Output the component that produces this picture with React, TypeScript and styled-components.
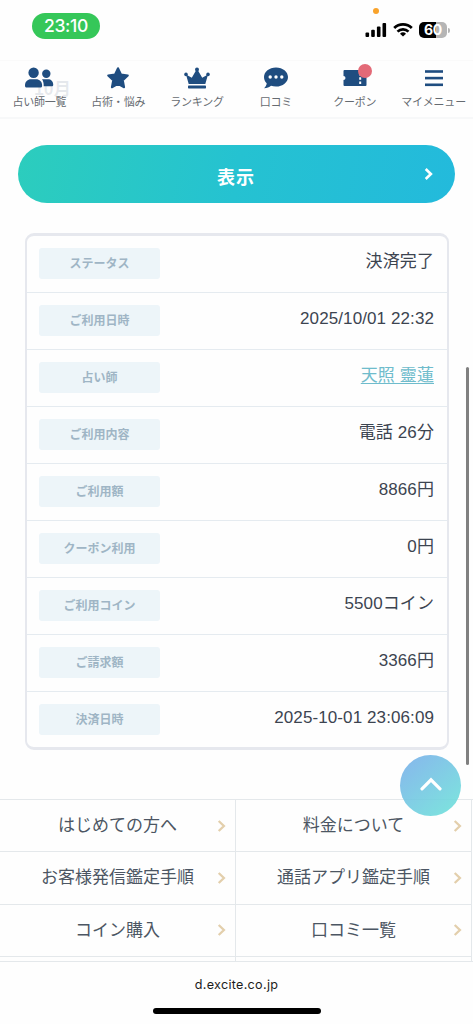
import React from 'react';
import styled, { createGlobalStyle } from 'styled-components';

const Global = createGlobalStyle`
  * { box-sizing: border-box; }
  body {
    margin: 0;
    background: #fefefe;
    font-family: "Liberation Sans", "Noto Sans CJK JP", sans-serif;
    color: #3c4654;
  }
  svg { display: block; }
`;

const Screen = styled.div`
  position: relative;
  display: flex;
  flex-direction: column;
  width: 473px;
  height: 1024px;
  overflow: hidden;
  background: #fefefe;
`;

const StatusBar = styled.header`
  display: flex;
  justify-content: space-between;
  height: 60px;
  padding: 13px 23px 0 32px;
`;

const Clock = styled.div`
  width: 68px;
  height: 26px;
  border-radius: 13px;
  background: #35c759;
  color: #fff;
  font: 500 17.5px/26px Inter, sans-serif;
  letter-spacing: -0.3px;
  text-align: center;
`;

const Indicators = styled.div`
  display: flex;
  gap: 6px;
  padding-top: 9px;
`;

const Battery = styled.div`
  width: 28px;
  height: 16px;
  border-radius: 5px;
  background: linear-gradient(90deg, #000 60%, #b5b5b5 60%);
  color: #fff;
  font: 700 14px/16px Inter, sans-serif;
  letter-spacing: -0.3px;
  text-align: center;
`;

const BatteryWrap = styled.div`
  display: flex;
  gap: 1px;
  &::after {
    content: '';
    width: 2px;
    height: 5px;
    margin-top: 5.5px;
    border-radius: 0 2px 2px 0;
    background: #b5b5b5;
  }
`;

const MicDot = styled.i`
  position: absolute;
  top: 8px;
  left: 373px;
  width: 6px;
  height: 6px;
  border-radius: 50%;
  background: #f9a32b;
`;

const Nav = styled.nav`
  position: relative;
  display: grid;
  grid-template-columns: repeat(6, 1fr);
  height: 59px;
  border-top: 1px solid #fafafa;
  border-bottom: 2px solid #f7f8f9;
`;

const NavItem = styled.a`
  position: relative;
  display: flex;
  flex-direction: column;
  align-items: center;
  padding-top: 4px;
  color: #666b71;
  font-size: 11px;
  line-height: 16px;
  letter-spacing: -0.2px;
  white-space: nowrap;
`;

const NavIcon = styled.span`
  display: flex;
  align-items: center;
  height: 26px;
  margin-bottom: 3px;
`;

const Badge = styled.i`
  position: absolute;
  top: 3px;
  left: 43px;
  width: 14px;
  height: 14px;
  border-radius: 50%;
  background: #e36a77;
`;

const PassingMonth = styled.div`
  position: absolute;
  top: 16px;
  left: 34px;
  color: rgba(60, 80, 110, 0.12);
  font-size: 17.5px;
  font-weight: 700;
  line-height: 24px;
`;

const Content = styled.main`
  flex: 1;
  padding-top: 26px;
`;

const ShowButton = styled.button`
  display: flex;
  align-items: center;
  justify-content: flex-end;
  width: 437px;
  height: 58px;
  margin: 0 0 0 18px;
  padding: 0 21px 0 0;
  border: 0;
  border-radius: 29px;
  background: linear-gradient(100deg, #2ccdbd 0%, #25c2d1 50%, #23badc 100%);
  color: #fff;
  font: 700 18px/26px "Noto Sans CJK JP", sans-serif;
  letter-spacing: 1px;
`;

const ShowLabel = styled.span`
  flex: 1;
  padding: 4px 0 0 30px;
  text-align: center;
`;

const Card = styled.dl`
  width: 424px;
  height: 517px;
  margin: 30px 0 0 25px;
  border: solid #e6e8ee;
  border-width: 3px 2px;
  border-radius: 9px;
  overflow: hidden;
`;

const Row = styled.div`
  display: flex;
  justify-content: space-between;
  height: 57.05px;
  padding: 12px 13px 0 12px;
  border-bottom: 1.5px solid #e5ebf0;
  &:last-child { border-bottom: 0; }
`;

const Chip = styled.dt`
  width: 121px;
  height: 31px;
  border-radius: 3px;
  background: #edf5f9;
  color: #9fb5c5;
  font: 700 12px/29px "Noto Sans CJK JP", sans-serif;
  text-align: center;
`;

const Value = styled.dd<{ $link?: boolean }>`
  margin: 0;
  padding-top: 1px;
  color: ${(p) => (p.$link ? '#6fbccc' : '#3c4450')};
  font-size: 17px;
  line-height: 26px;
  letter-spacing: 0.1px;
  text-decoration: ${(p) => (p.$link ? 'underline' : 'none')};
  text-decoration-thickness: 1px;
  text-underline-offset: 2px;
`;

const Links = styled.div`
  display: grid;
  grid-template-columns: 236px 236px;
  grid-auto-rows: 52.3px;
  width: 473px;
  height: 163px;
  margin-top: 49px;
  border-top: 1px solid #e4e8eb;
  border-bottom: 1px solid #e4e8eb;
  overflow: hidden;
`;

const LinkCell = styled.a`
  display: flex;
  align-items: center;
  padding-right: 8px;
  border-right: 1px solid #e4e8eb;
  border-bottom: 1px solid #e4e8eb;
  color: #4c5663;
  font-size: 17px;
  line-height: 24px;
`;

const LinkLabel = styled.span`
  flex: 1;
  padding: 1px 0 0 18px;
  text-align: center;
  white-space: nowrap;
`;

const TopButton = styled.button`
  position: absolute;
  top: 755px;
  left: 400px;
  display: grid;
  place-items: center;
  width: 61px;
  height: 61px;
  padding: 0 0 3px;
  border: 0;
  border-radius: 50%;
  background: linear-gradient(140deg, rgba(117, 178, 232, 0.88) 12%, rgba(107, 222, 218, 0.88) 90%);
`;

const ScrollThumb = styled.i`
  position: absolute;
  top: 367px;
  left: 466px;
  width: 3px;
  height: 398px;
  border-radius: 2px;
  background: #808080;
`;

const BrowserBar = styled.footer`
  display: flex;
  flex-direction: column;
  align-items: center;
  height: 62px;
  padding-top: 14px;
  color: #1c1c1c;
  font: 400 12.6px/18px Inter, sans-serif;
  letter-spacing: 0.3px;
`;

const HomeBar = styled.i`
  width: 168px;
  height: 6px;
  margin-top: 14px;
  border-radius: 3px;
  background: #000;
`;

const NAVY = '#1f4d80';

const Signal = () => (
  <svg width="22" height="16" viewBox="0 0 22 16">
    <rect x="0.5" y="10.5" width="3.6" height="4.5" rx="1" />
    <rect x="6.2" y="7.7" width="3.6" height="7.3" rx="1" />
    <rect x="11.9" y="4.4" width="3.6" height="10.6" rx="1" />
    <rect x="17.5" y="1" width="3.6" height="14" rx="1" />
  </svg>
);

const Wifi = () => (
  <svg width="20" height="16" viewBox="0 0 20 16" fill="none" stroke="#000" strokeWidth="2.7">
    <path d="M1.2 6a12.5 12.5 0 0 1 17.6 0" />
    <path d="M4.5 9.6a7.8 7.8 0 0 1 11 0" />
    <path d="M10 14.6 7 11.7a4.4 4.4 0 0 1 6 0Z" fill="#000" stroke="none" />
  </svg>
);

const Chevron = ({ color, width = 2.3 }: { color: string; width?: number }) => (
  <svg width="10" height="14" viewBox="0 0 10 14" fill="none" stroke={color} strokeWidth={width}>
    <path d="m1.7 2 5.2 5-5.2 5" />
  </svg>
);

const People = () => (
  <svg width="30" height="22" viewBox="0 0 30 22" fill={NAVY}>
    <circle cx="9.6" cy="5.8" r="5.2" />
    <circle cx="22.3" cy="6.7" r="4.2" />
    <path d="M1 18.3c0-3.600 2.600-6 6-6h5.100c3.400 0 6 2.400 6 6v.7c0 .9-.6 1.500-1.500 1.500H2.500C1.600 20.500 1 19.900 1 19Z" />
    <path d="M18 12.3h6c3 0 5.200 2.100 5.200 5v.6c0 .9-.5 1.400-1.400 1.400h-8.100c.1-3.300-.5-5.300-1.700-7Z" />
  </svg>
);

const Star = () => (
  <svg width="24" height="24" viewBox="0 0 24 24" fill={NAVY} stroke={NAVY} strokeWidth="2" strokeLinejoin="round">
    <path d="m12 2.2 3 6.3 6.8 1-5 4.8 1.3 7-6.1-3.4-6.1 3.4 1.3-7-5-4.8 6.8-1Z" />
  </svg>
);

const Crown = () => (
  <svg width="28" height="24" viewBox="0 0 28 24" fill={NAVY}>
    <circle cx="14" cy="3.6" r="2" />
    <circle cx="3" cy="8.4" r="1.8" />
    <circle cx="25" cy="8.4" r="1.8" />
    <path d="m3 8.5 5.8 3.2L13 4.5h2l4.2 7.2L25 8.5l-2.7 9.6H5.7Z" />
    <rect x="5" y="19.6" width="18" height="2.8" rx=".7" />
  </svg>
);

const Bubble = () => (
  <svg width="26" height="22" viewBox="0 0 26 22">
    <path fill={NAVY} d="M13 .4C6.2.4 1 4.7 1 10c0 2.500 1 4.600 2.700 6.200C3.500 18.200 2.500 20 1 21.200c3 0 5.400-1 7-2.400 1.500.5 3.200.8 5 .8 6.800 0 12-4.300 12-9.600S19.800.4 13 .4Z" />
    <g fill="#fff">
      <circle cx="7.2" cy="10" r="1.7" />
      <circle cx="13" cy="10" r="1.7" />
      <circle cx="18.8" cy="10" r="1.7" />
    </g>
  </svg>
);

const Ticket = () => (
  <svg width="24" height="18" viewBox="0 0 24 18">
    <path fill={NAVY} d="M1.5 1h21A1 1 0 0 1 23.5 2v14a1 1 0 0 1-1 1h-21a1 1 0 0 1-1-1v-5a2 2 0 0 0 0-4V2a1 1 0 0 1 1-1Z" />
    <path stroke="#fff" strokeWidth="2" strokeDasharray="2.5 1.8" d="M17.2 4v12" />
  </svg>
);

const Menu = () => (
  <svg width="18" height="18" viewBox="0 0 18 18" fill={NAVY}>
    <rect y="1.2" width="18" height="2.6" />
    <rect y="7.8" width="18" height="2.6" />
    <rect y="14.5" width="18" height="2.6" />
  </svg>
);

const NAV = [
  { label: '占い師一覧', icon: <People /> },
  { label: '占術・悩み', icon: <Star /> },
  { label: 'ランキング', icon: <Crown /> },
  { label: '口コミ', icon: <Bubble /> },
  { label: 'クーポン', icon: <Ticket />, badge: true },
  { label: 'マイメニュー', icon: <Menu /> },
];

const ROWS = [
  { label: 'ステータス', value: '決済完了' },
  { label: 'ご利用日時', value: '2025/10/01 22:32' },
  { label: '占い師', value: '天照 靈蓮', link: true },
  { label: 'ご利用内容', value: '電話 26分' },
  { label: 'ご利用額', value: '8866円' },
  { label: 'クーポン利用', value: '0円' },
  { label: 'ご利用コイン', value: '5500コイン' },
  { label: 'ご請求額', value: '3366円' },
  { label: '決済日時', value: '2025-10-01 23:06:09' },
];

const LINKS = [
  'はじめての方へ',
  '料金について',
  'お客様発信鑑定手順',
  '通話アプリ鑑定手順',
  'コイン購入',
  '口コミ一覧',
];

export default function App() {
  return (
    <>
      <Global />
      <Screen>
        <StatusBar>
          <Clock>23:10</Clock>
          <Indicators>
            <Signal />
            <Wifi />
            <BatteryWrap>
              <Battery>60</Battery>
            </BatteryWrap>
          </Indicators>
          <MicDot />
        </StatusBar>
        <Nav>
          {NAV.map((item) => (
            <NavItem key={item.label}>
              <NavIcon>{item.icon}</NavIcon>
              {item.label}
              {item.badge && <Badge />}
            </NavItem>
          ))}
          <PassingMonth>10月</PassingMonth>
        </Nav>
        <Content>
          <ShowButton>
            <ShowLabel>表示</ShowLabel>
            <Chevron color="#fff" width={2.6} />
          </ShowButton>
          <Card>
            {ROWS.map((row) => (
              <Row key={row.label}>
                <Chip>{row.label}</Chip>
                <Value $link={row.link}>{row.value}</Value>
              </Row>
            ))}
          </Card>
          <Links>
            {LINKS.map((label) => (
              <LinkCell key={label}>
                <LinkLabel>{label}</LinkLabel>
                <Chevron color="#e3cfac" />
              </LinkCell>
            ))}
            <LinkCell />
            <LinkCell />
          </Links>
        </Content>
        <BrowserBar>
          d.excite.co.jp
          <HomeBar />
        </BrowserBar>
        <TopButton>
          <svg width="22" height="14" viewBox="0 0 22 14" fill="none" stroke="#fff" strokeWidth="3.2" strokeLinecap="round">
            <path d="m2 11.8 9-9 9 9" />
          </svg>
        </TopButton>
        <ScrollThumb />
      </Screen>
    </>
  );
}
